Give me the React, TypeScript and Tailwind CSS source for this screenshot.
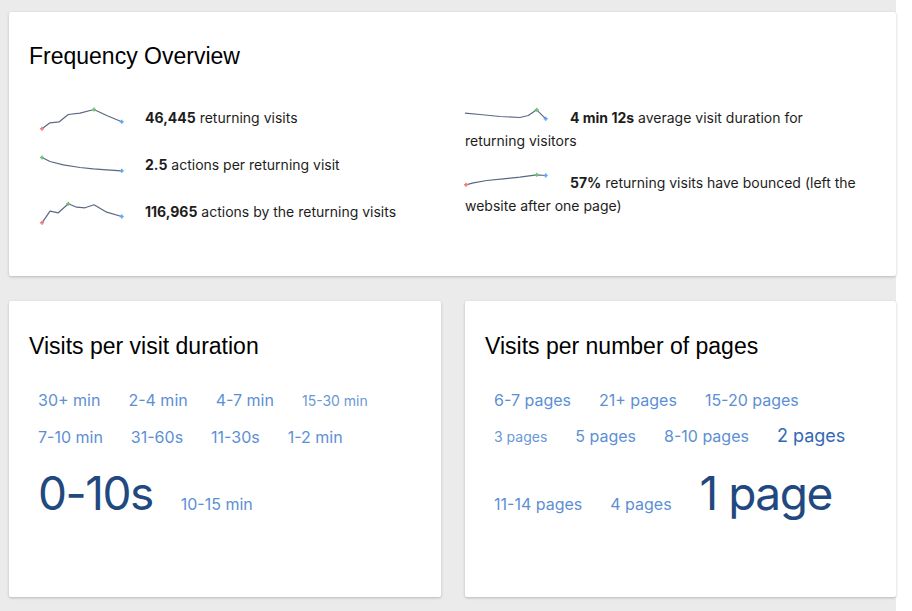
type Pt = [number, number]

const sparks: { pts: Pt[]; min?: number; max: number }[] = [
  {
    pts: [[2, 22.8], [10, 16.8], [19.3, 15.8], [28.3, 8.5], [40, 7.2], [54, 3.5], [66.7, 9.5], [81.7, 15.8]],
    min: 0,
    max: 5,
  },
  {
    pts: [[2, 4.5], [10, 8.5], [23.3, 11.8], [40, 14.5], [53.3, 15.8], [66.7, 16.8], [81.7, 17.8]],
    max: 0,
  },
  {
    pts: [[2, 22.8], [10, 11.2], [18.3, 12.8], [28.3, 3.8], [36.7, 7.2], [45, 7.8], [54, 4.8], [66.7, 12.2], [81.7, 16.5]],
    min: 0,
    max: 3,
  },
  {
    pts: [[0, 7.2], [15, 8.5], [35, 10.5], [55, 11.5], [63.3, 9.5], [71.7, 3.8], [80.7, 12.8]],
    max: 5,
  },
  {
    pts: [[1, 13.8], [8.3, 11.8], [21.7, 9.5], [38.3, 7.8], [55, 6.2], [71.7, 3.8], [80.7, 4.5]],
    min: 0,
    max: 5,
  },
]

function Mark({ p, color }: { p: Pt; color: string }) {
  const [x, y] = p
  return (
    <path
      d={`M${x - 2} ${y}h4M${x} ${y - 2}v4`}
      stroke={color}
      strokeWidth={1.6}
      fill="none"
    />
  )
}

// float is only 23px tall so a wrapped second line goes back under the chart
function Sparkline({ i }: { i: number }) {
  const s = sparks[i]
  const last = s.pts[s.pts.length - 1]
  return (
    <svg width="84" height="23" viewBox="0 0 84 23" overflow="visible" className="float-left mr-[21px]">
      <polyline
        points={s.pts.map((p) => p.join(',')).join(' ')}
        fill="none"
        stroke="#5c6783"
        strokeWidth={1.2}
        strokeLinejoin="round"
      />
      {s.min !== undefined && <Mark p={s.pts[s.min]} color="#f08080" />}
      <Mark p={s.pts[s.max]} color="#74c374" />
      <Mark p={last} color="#5ea3f5" />
    </svg>
  )
}

function Stat({ i, strong, text, tall }: { i: number; strong: string; text: string; tall?: boolean }) {
  return (
    <div
      className={`flow-root mb-[19px] text-[14px] leading-[23px] text-[#1d1d1d] ${tall ? 'min-h-[28px]' : ''}`}
    >
      <Sparkline i={i} />
      <span className="font-bold">{strong}</span> {text}
    </div>
  )
}

type Tag = { label: string; cls: string }

const big = 'text-[46px] leading-[77px] tracking-[-1.5px] text-[#22497f]'
const norm = 'text-[16px] text-[#5d8fd4]'
const small = 'text-[14px] text-[#6a98d8]'

const durations: Tag[][] = [
  [
    { label: '30+ min', cls: norm },
    { label: '2-4 min', cls: norm },
    { label: '4-7 min', cls: norm },
    { label: '15-30 min', cls: small },
  ],
  [
    { label: '7-10 min', cls: norm },
    { label: '31-60s', cls: norm },
    { label: '11-30s', cls: norm },
    { label: '1-2 min', cls: norm },
  ],
  [
    { label: '0-10s', cls: big },
    { label: '10-15 min', cls: norm },
  ],
]

const pages: Tag[][] = [
  [
    { label: '6-7 pages', cls: norm },
    { label: '21+ pages', cls: norm },
    { label: '15-20 pages', cls: norm },
  ],
  [
    { label: '3 pages', cls: small },
    { label: '5 pages', cls: norm },
    { label: '8-10 pages', cls: norm },
    { label: '2 pages', cls: 'text-[18px] text-[#3468b6]' },
  ],
  [
    { label: '11-14 pages', cls: norm },
    { label: '4 pages', cls: norm },
    { label: '1 page', cls: big },
  ],
]

function Cloud({ rows }: { rows: Tag[][] }) {
  return (
    <div className="pl-[9px] font-['Inter',sans-serif]">
      {rows.map((row, r) => (
        <div key={r} className="flex items-baseline gap-x-[28px]">
          {row.map((t) => (
            <a key={t.label} className={`leading-[36px] cursor-pointer ${t.cls}`}>
              {t.label}
            </a>
          ))}
        </div>
      ))}
    </div>
  )
}

function Title({ children, className = '' }: { children: string; className?: string }) {
  return (
    <h2 className={`font-['Liberation_Sans',Arial,sans-serif] text-[23px] leading-[28px] text-black ${className}`}>
      {children}
    </h2>
  )
}

const card = 'bg-white rounded-[2px] shadow-[0_1px_3px_rgba(0,0,0,0.22)] px-5'

export default function App() {
  return (
    <div className="min-h-[611px] bg-[#ebebeb] pl-[9px] pt-[12px] w-[896px] font-['Inter',sans-serif]">
      <div className={`${card} pt-[29.5px] pb-[10px] h-[264px]`}>
        <Title className="mb-[36px]">Frequency Overview</Title>
        <div className="grid grid-cols-[436px_1fr]">
          <div className="pl-[11px] pr-[11px]">
            <Stat i={0} tall strong="46,445" text="returning visits" />
            <Stat i={1} tall strong="2.5" text="actions per returning visit" />
            <Stat i={2} tall strong="116,965" text="actions by the returning visits" />
          </div>
          <div className="pr-[11px]">
            <Stat i={3} strong="4 min 12s" text="average visit duration for returning visitors" />
            <Stat i={4} strong="57%" text="returning visits have bounced (left the website after one page)" />
          </div>
        </div>
      </div>

      <div className="mt-[25px] grid grid-cols-[432px_431px] gap-x-[24px] items-start">
        <div className={`${card} pt-[30.5px] pb-[65px]`}>
          <Title className="mb-[22.5px]">Visits per visit duration</Title>
          <Cloud rows={durations} />
        </div>
        <div className={`${card} pt-[30.5px] pb-[65px]`}>
          <Title className="mb-[22.5px]">Visits per number of pages</Title>
          <Cloud rows={pages} />
        </div>
      </div>
    </div>
  )
}
